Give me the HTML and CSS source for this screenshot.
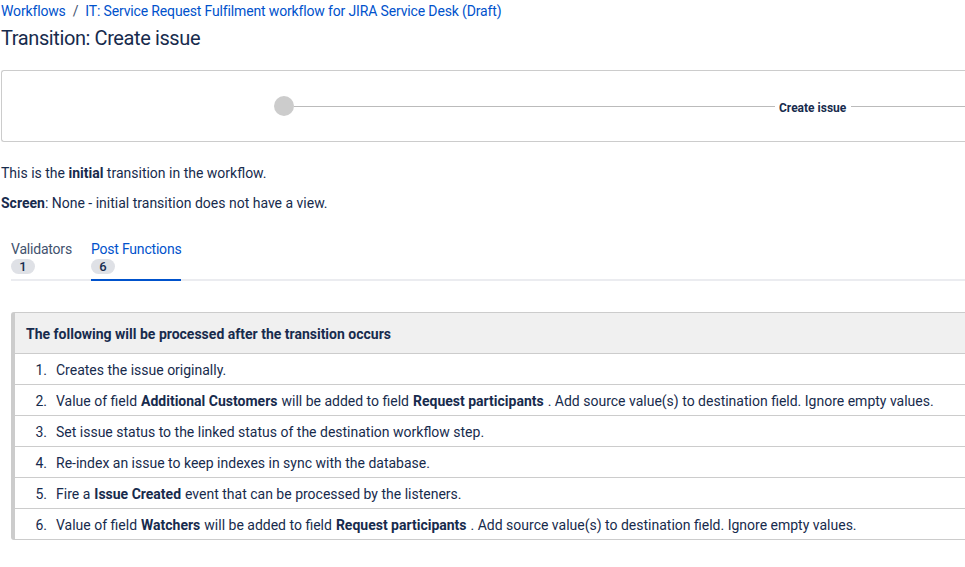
FILE: index.html
```html
<!DOCTYPE html>
<html>
<head>
<meta charset="utf-8">
<link rel="stylesheet" href="styles.css">
</head>
<body>
<div class="page">
  <nav class="crumbs">
    <a class="crumb" href="#">Workflows</a>
    <span class="sep">/</span>
    <a class="crumb" href="#">IT: Service Request Fulfilment workflow for JIRA Service Desk (Draft)</a>
  </nav>
  <h1 class="title">Transition: Create issue</h1>

  <div class="diagram">
    <span class="node"></span>
    <span class="edge edge-first"></span>
    <span class="edge-label">Create issue</span>
    <span class="edge edge-rest"></span>
  </div>

  <p class="info">This is the <b>initial</b> transition in the workflow.</p>
  <p class="info"><b>Screen</b>: None - initial transition does not have a view.</p>

  <div class="tabs">
    <div class="tab">
      <span class="tab-label">Validators</span>
      <span class="badge">1</span>
    </div>
    <div class="tab active">
      <span class="tab-label">Post Functions</span>
      <span class="badge">6</span>
    </div>
  </div>

  <div class="panel">
    <div class="panel-head">The following will be processed after the transition occurs</div>
    <ol class="steps">
      <li class="step">Creates the issue originally.</li>
      <li class="step">Value of field <b>Additional Customers</b> will be added to field <b>Request participants</b> . Add source value(s) to destination field. Ignore empty values.</li>
      <li class="step">Set issue status to the linked status of the destination workflow step.</li>
      <li class="step">Re-index an issue to keep indexes in sync with the database.</li>
      <li class="step">Fire a <b>Issue Created</b> event that can be processed by the listeners.</li>
      <li class="step">Value of field <b>Watchers</b> will be added to field <b>Request participants</b> . Add source value(s) to destination field. Ignore empty values.</li>
    </ol>
  </div>
</div>
</body>
</html>
```

FILE: styles.css
```css
html, body {
  margin: 0;
  padding: 0;
  background: #fff;
}

body {
  font-family: "Segoe UI", Roboto, "Liberation Sans", sans-serif;
  font-size: 14px;
  line-height: 20px;
  color: #172b4d;
}

.page {
  padding: 1px 0 0 1px;
}

.crumbs {
  display: flex;
  align-items: center;
  gap: 7px;
  height: 20px;
  letter-spacing: -0.15px;
}

.crumb {
  color: #0052cc;
  text-decoration: none;
}

.sep {
  color: #42526e;
}

.title {
  margin: 3px 0 0;
  font-size: 20px;
  line-height: 28px;
  font-weight: 400;
  color: #172b4d;
  letter-spacing: -0.4px;
}

.diagram {
  margin-top: 18px;
  height: 70px;
  border: 1px solid #ccc;
  border-right: none;
  border-radius: 3px 0 0 3px;
  display: flex;
  align-items: center;
  padding-left: 272px;
}

.node {
  width: 20px;
  height: 20px;
  border-radius: 50%;
  background: #ccc;
  flex: none;
}

.edge {
  height: 1px;
  background: #bbb;
}

.edge-first {
  width: 481px;
  flex: none;
}

.edge-rest {
  flex: 1;
}

.edge-label {
  font-size: 12px;
  font-weight: 700;
  color: #172b4d;
  padding: 3px 5px 0 4px;
  line-height: 16px;
}

.info {
  margin: 21px 0 0;
}

.info + .info {
  margin-top: 10px;
}

.tabs {
  margin: 26px 0 0 10px;
  display: flex;
  gap: 19px;
  border-bottom: 2px solid #ebecf0;
}

.tab {
  display: flex;
  flex-direction: column;
  align-items: flex-start;
  padding-bottom: 5px;
  margin-bottom: -2px;
  border-bottom: 2px solid transparent;
  min-width: 60px;
}

.tab.active {
  border-bottom-color: #0052cc;
}

.tab-label {
  color: #42526e;
  line-height: 20px;
  letter-spacing: -0.2px;
}

.tab.active .tab-label {
  color: #0052cc;
}

.badge {
  margin-top: 0;
  min-width: 24px;
  height: 15px;
  line-height: 15px;
  border-radius: 8px;
  background: #dfe1e6;
  color: #172b4d;
  font-size: 13px;
  font-weight: 500;
  text-align: center;
}

.panel {
  margin: 31px 0 0 10px;
  border: 1px solid #ccc;
  border-left: 4px solid #ccc;
  border-right: none;
  border-radius: 3px 0 0 3px;
}

.panel-head {
  background: #f0f0f0;
  height: 40px;
  line-height: 42px;
  padding-left: 11px;
  font-weight: 700;
  border-bottom: 1px solid #ccc;
}

.steps {
  margin: 0;
  padding: 0;
  list-style: none;
  counter-reset: step;
}

.step {
  counter-increment: step;
  height: 30px;
  line-height: 32px;
  border-bottom: 1px solid #ccc;
  display: flex;
}

.step::before {
  content: counter(step) ".";
  flex: none;
  width: 32px;
  margin-right: 9px;
  text-align: right;
}

.step b {
  margin: 0 4px;
}

.step:last-child {
  border-bottom: none;
}
```
